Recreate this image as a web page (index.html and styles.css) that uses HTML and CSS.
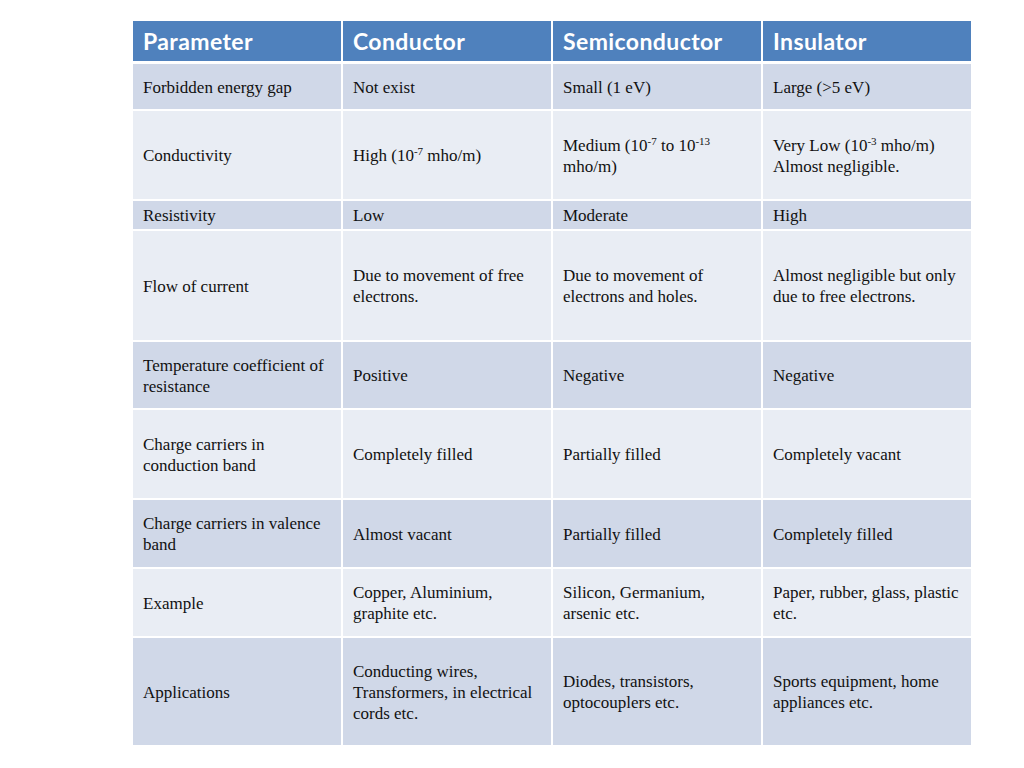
FILE: index.html
```html
<!DOCTYPE html>
<html>
<head>
<meta charset="utf-8">
<link rel="stylesheet" href="styles.css">
</head>
<body>
<div class="table">
  <div class="row head">
    <div class="cell"><p>Parameter</p></div>
    <div class="cell"><p>Conductor</p></div>
    <div class="cell"><p>Semiconductor</p></div>
    <div class="cell"><p>Insulator</p></div>
  </div>
  <div class="row dark r1">
    <div class="cell"><p>Forbidden energy gap</p></div>
    <div class="cell"><p>Not exist</p></div>
    <div class="cell"><p>Small (1 eV)</p></div>
    <div class="cell"><p>Large (&gt;5 eV)</p></div>
  </div>
  <div class="row light r2">
    <div class="cell"><p>Conductivity</p></div>
    <div class="cell"><p>High (10<sup>-7</sup> mho/m)</p></div>
    <div class="cell"><p>Medium (10<sup>-7</sup> to 10<sup>-13</sup><br>mho/m)</p></div>
    <div class="cell"><p>Very Low (10<sup>-3</sup> mho/m)<br>Almost negligible.</p></div>
  </div>
  <div class="row dark r3">
    <div class="cell"><p>Resistivity</p></div>
    <div class="cell"><p>Low</p></div>
    <div class="cell"><p>Moderate</p></div>
    <div class="cell"><p>High</p></div>
  </div>
  <div class="row light r4">
    <div class="cell"><p>Flow of current</p></div>
    <div class="cell"><p>Due to movement of free<br>electrons.</p></div>
    <div class="cell"><p>Due to movement of<br>electrons and holes.</p></div>
    <div class="cell"><p>Almost negligible but only<br>due to free electrons.</p></div>
  </div>
  <div class="row dark r5">
    <div class="cell"><p>Temperature coefficient of<br>resistance</p></div>
    <div class="cell"><p>Positive</p></div>
    <div class="cell"><p>Negative</p></div>
    <div class="cell"><p>Negative</p></div>
  </div>
  <div class="row light r6">
    <div class="cell"><p>Charge carriers in<br>conduction band</p></div>
    <div class="cell"><p>Completely filled</p></div>
    <div class="cell"><p>Partially filled</p></div>
    <div class="cell"><p>Completely vacant</p></div>
  </div>
  <div class="row dark r7">
    <div class="cell"><p>Charge carriers in valence<br>band</p></div>
    <div class="cell"><p>Almost vacant</p></div>
    <div class="cell"><p>Partially filled</p></div>
    <div class="cell"><p>Completely filled</p></div>
  </div>
  <div class="row light r8">
    <div class="cell"><p>Example</p></div>
    <div class="cell"><p>Copper, Aluminium,<br>graphite etc.</p></div>
    <div class="cell"><p>Silicon, Germanium,<br>arsenic etc.</p></div>
    <div class="cell"><p>Paper, rubber, glass, plastic<br>etc.</p></div>
  </div>
  <div class="row dark r9">
    <div class="cell"><p>Applications</p></div>
    <div class="cell"><p>Conducting wires,<br>Transformers, in electrical<br>cords etc.</p></div>
    <div class="cell"><p>Diodes, transistors,<br>optocouplers etc.</p></div>
    <div class="cell"><p>Sports equipment, home<br>appliances etc.</p></div>
  </div>
</div>
</body>
</html>
```

FILE: styles.css
```css
html, body {
  margin: 0;
  padding: 0;
  background: #ffffff;
}

.table {
  margin: 21px 0 0 133px;
  width: 838px;
  display: flex;
  flex-direction: column;
  gap: 2px;
}

.row {
  display: grid;
  grid-template-columns: repeat(4, 1fr);
  column-gap: 2px;
}

.cell {
  display: flex;
  flex-direction: column;
  justify-content: center;
  padding: 1px 10px 0 10px;
  font-family: "Liberation Serif", "Times New Roman", serif;
  font-size: 17px;
  line-height: 21px;
  color: #111111;
}

.cell p {
  margin: 0;
  white-space: nowrap;
}

.cell sup {
  font-size: 11px;
  line-height: 0;
  vertical-align: 6px;
}

.head {
  height: 40px;
  margin-bottom: 1px;
}

.head .cell {
  background: #4f81bd;
  color: #ffffff;
  font-family: Lato, "Open Sans", sans-serif;
  font-weight: 700;
  font-size: 23px;
  letter-spacing: 0.4px;
  padding-top: 0;
}

.dark .cell { background: #d0d8e8; }
.light .cell { background: #e9edf4; }

.r1 { height: 45px; }
.r2 { height: 88px; }
.r3 { height: 28px; }
.r4 { height: 109px; }
.r5 { height: 66px; }
.r6 { height: 88px; }
.r7 { height: 67px; }
.r8 { height: 67px; }
.r9 { height: 107px; }
```
